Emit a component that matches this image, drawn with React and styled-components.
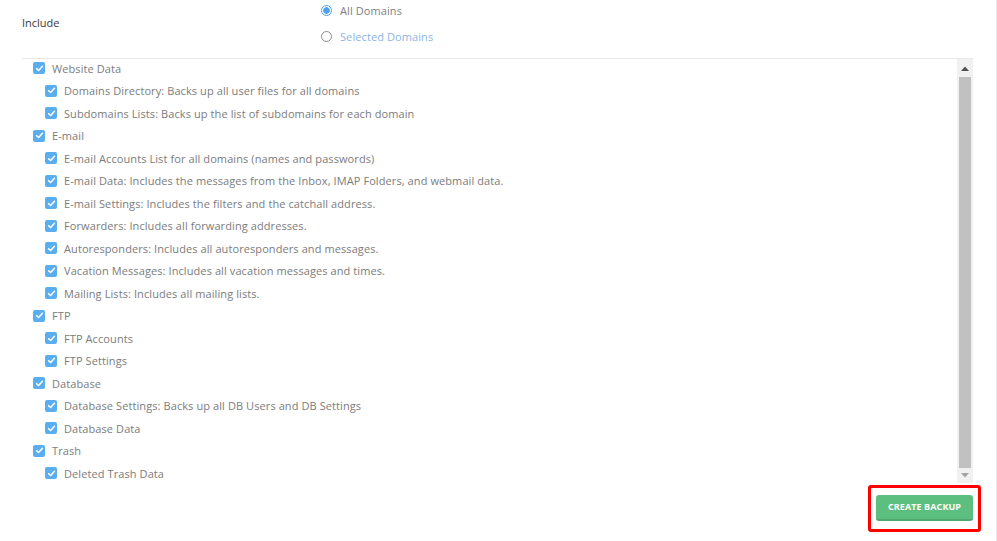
import styled, { createGlobalStyle } from "styled-components";

const GlobalStyle = createGlobalStyle`
  html, body {
    margin: 0;
    padding: 0;
    background: #ffffff;
  }
  body {
    font-family: "Open Sans", "Liberation Sans", sans-serif;
  }
`;

const GROUPS = [
  {
    title: "Website Data",
    items: [
      "Domains Directory: Backs up all user files for all domains",
      "Subdomains Lists: Backs up the list of subdomains for each domain",
    ],
  },
  {
    title: "E-mail",
    items: [
      "E-mail Accounts List for all domains (names and passwords)",
      "E-mail Data: Includes the messages from the Inbox, IMAP Folders, and webmail data.",
      "E-mail Settings: Includes the filters and the catchall address.",
      "Forwarders: Includes all forwarding addresses.",
      "Autoresponders: Includes all autoresponders and messages.",
      "Vacation Messages: Includes all vacation messages and times.",
      "Mailing Lists: Includes all mailing lists.",
    ],
  },
  {
    title: "FTP",
    items: ["FTP Accounts", "FTP Settings"],
  },
  {
    title: "Database",
    items: [
      "Database Settings: Backs up all DB Users and DB Settings",
      "Database Data",
    ],
  },
  {
    title: "Trash",
    items: ["Deleted Trash Data"],
  },
];

const Page = styled.div`
  width: 997px;
  height: 541px;
  box-sizing: border-box;
  padding: 0 23px 0 22px;
  border-right: 1px solid #e9e9ef;
  display: flex;
  flex-direction: column;
`;

const Header = styled.div`
  height: 58px;
  display: flex;
  align-items: flex-start;
`;

const Label = styled.div`
  width: 299px;
  padding-top: 15px;
  font-size: 11px;
  line-height: 15px;
  color: #3a3a3a;
`;

const RadioGroup = styled.div`
  display: flex;
  flex-direction: column;
  gap: 6px;
`;

const RadioRow = styled.div`
  height: 20px;
  display: flex;
  align-items: center;
  gap: 8px;
  font-size: 11px;
  letter-spacing: 0.09px;
  color: ${({ selected }) => (selected ? "#808080" : "#8bb6e6")};
`;

const RadioDot = styled.span`
  width: 11px;
  height: 11px;
  box-sizing: border-box;
  border-radius: 50%;
  border: 1.5px solid ${({ selected }) => (selected ? "#4da3ef" : "#8a8a8a")};
  background: ${({ selected }) =>
    selected ? "radial-gradient(circle, #4da3ef 0 3px, #ffffff 3.5px)" : "#ffffff"};
`;

const ListBox = styled.div`
  height: 425px;
  box-sizing: border-box;
  border-top: 1px solid #e8e8e8;
  display: flex;
`;

const List = styled.div`
  flex: 1;
  overflow: hidden;
  padding-left: 11px;
`;

const Row = styled.div`
  height: 18px;
  margin-bottom: 4.5px;
  display: flex;
  align-items: center;
  gap: 7px;
  padding-left: ${({ sub }) => (sub ? "12px" : "0")};
  font-size: 11px;
  letter-spacing: 0.09px;
  color: #7c7c7c;
  white-space: nowrap;
`;

const Box = styled.span`
  width: 12px;
  height: 12px;
  flex: none;
  border-radius: 2px;
  background: #5aaef0;
  display: flex;
  align-items: center;
  justify-content: center;
`;

const ScrollTrack = styled.div`
  width: 16px;
  background: #f1f1f1;
  display: flex;
  flex-direction: column;
  align-items: center;
`;

const ScrollArrow = styled.div`
  height: ${({ up }) => (up ? "18px" : "15px")};
  display: flex;
  align-items: center;
  justify-content: center;
`;

const Thumb = styled.div`
  flex: 1;
  width: 12px;
  background: #c1c1c1;
`;

const Footer = styled.div`
  padding-top: 2px;
  margin-right: -8px;
  display: flex;
  justify-content: flex-end;
`;

const Highlight = styled.div`
  border: 3px solid #ff0000;
  border-radius: 3px;
  padding: 5px 5px 8px 5px;
`;

const CreateButton = styled.button`
  width: 97px;
  height: 26px;
  box-sizing: border-box;
  border: none;
  border-bottom: 2px solid #4fa86f;
  border-radius: 3px;
  background: #5dbf7f;
  color: #ffffff;
  font-family: "Open Sans", "Liberation Sans", sans-serif;
  font-weight: 700;
  font-size: 9px;
  letter-spacing: 0.1px;
  padding: 0;
  cursor: pointer;
`;

const Check = () => (
  <Box>
    <svg width="9" height="9" viewBox="0 0 10 10">
      <polyline
        points="1.8,5.2 4,7.3 8.3,2.6"
        fill="none"
        stroke="#ffffff"
        strokeWidth="1.7"
        strokeLinecap="round"
        strokeLinejoin="round"
      />
    </svg>
  </Box>
);

const App = () => {
  return (
    <>
      <GlobalStyle />
      <Page>
        <Header>
          <Label>Include</Label>
          <RadioGroup>
            <RadioRow selected>
              <RadioDot selected />
              All Domains
            </RadioRow>
            <RadioRow>
              <RadioDot />
              Selected Domains
            </RadioRow>
          </RadioGroup>
        </Header>

        <ListBox>
          <List>
            {GROUPS.map((group) => (
              <div key={group.title}>
                <Row>
                  <Check />
                  {group.title}
                </Row>
                {group.items.map((item) => (
                  <Row sub key={item}>
                    <Check />
                    {item}
                  </Row>
                ))}
              </div>
            ))}
          </List>
          <ScrollTrack>
            <ScrollArrow up>
              <svg width="8" height="5" viewBox="0 0 8 5">
                <polygon points="0,5 4,0.5 8,5" fill="#505050" />
              </svg>
            </ScrollArrow>
            <Thumb />
            <ScrollArrow>
              <svg width="8" height="5" viewBox="0 0 8 5">
                <polygon points="0,0 8,0 4,4.5" fill="#a3a3a3" />
              </svg>
            </ScrollArrow>
          </ScrollTrack>
        </ListBox>

        <Footer>
          <Highlight>
            <CreateButton>CREATE BACKUP</CreateButton>
          </Highlight>
        </Footer>
      </Page>
    </>
  );
};

export default App;
